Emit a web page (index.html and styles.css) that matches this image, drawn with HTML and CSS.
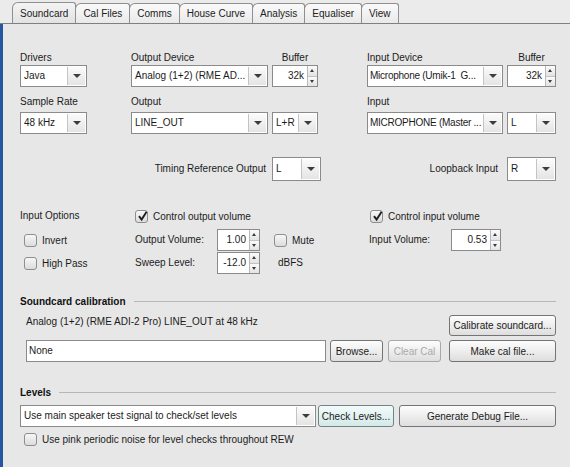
FILE: index.html
```html
<!DOCTYPE html>
<html lang="en">
<head>
    <meta charset="UTF-8">
    <title>REW Preferences - Soundcard</title>
    <link rel="stylesheet" href="styles.css">
</head>
<body>
    <div class="tabs">
        <div class="tab active">Soundcard</div>
        <div class="tab">Cal Files</div>
        <div class="tab">Comms</div>
        <div class="tab">House Curve</div>
        <div class="tab">Analysis</div>
        <div class="tab">Equaliser</div>
        <div class="tab">View</div>
    </div>

    <div class="panel">
        <!-- devices -->
        <div class="cols block">
            <span class="lbl c1">Drivers</span>
            <span class="lbl c3">Output Device</span>
            <span class="lbl c5 mid">Buffer</span>
            <span class="lbl c7">Input Device</span>
            <span class="lbl c9 mid">Buffer</span>

            <div class="combo c1"><span class="val">Java</span><span class="arrow"></span></div>
            <div class="combo c3"><span class="val">Analog (1+2) (RME AD...</span><span class="arrow"></span></div>
            <div class="spin c5"><span class="num">32k</span><span class="btns"><i class="up"></i><i class="dn"></i></span></div>
            <div class="combo c7"><span class="val narrow">Microphone (Umik-1&nbsp; G...</span><span class="arrow"></span></div>
            <div class="spin c9"><span class="num">32k</span><span class="btns"><i class="up"></i><i class="dn"></i></span></div>
        </div>

        <div class="cols block second">
            <span class="lbl c1">Sample Rate</span>
            <span class="lbl c3">Output</span>
            <span class="lbl c7">Input</span>

            <div class="combo c1"><span class="val">48 kHz</span><span class="arrow"></span></div>
            <div class="combo c3"><span class="val">LINE_OUT</span><span class="arrow"></span></div>
            <div class="combo c5"><span class="val">L+R</span><span class="arrow"></span></div>
            <div class="combo c7"><span class="val narrow">MICROPHONE (Master ...</span><span class="arrow"></span></div>
            <div class="combo c9"><span class="val">L</span><span class="arrow"></span></div>
        </div>

        <div class="cols timing">
            <span class="lbl left-span">Timing Reference Output</span>
            <div class="combo tall c5 wide"><span class="val">L</span><span class="arrow"></span></div>
            <span class="lbl right-span">Loopback Input</span>
            <div class="combo tall c9"><span class="val">R</span><span class="arrow"></span></div>
        </div>

        <!-- volume options -->
        <div class="options">
            <span class="lbl o1">Input Options</span>
            <label class="check o2 span4 tight"><span class="box on"><svg width="13" height="13" viewBox="0 0 13 13"><path d="M3 6.2 L5.6 9.6 L10.6 1.8" stroke="#1e1e1e" stroke-width="1.9" fill="none"/></svg></span>Control output volume</label>
            <label class="check o6 span2 tight"><span class="box on"><svg width="13" height="13" viewBox="0 0 13 13"><path d="M3 6.2 L5.6 9.6 L10.6 1.8" stroke="#1e1e1e" stroke-width="1.9" fill="none"/></svg></span>Control input volume</label>

            <label class="check o1 indent"><span class="box"></span>Invert</label>
            <span class="lbl o2 pad1 v">Output Volume:</span>
            <div class="spin o3"><span class="num">1.00</span><span class="btns"><i class="up"></i><i class="dn"></i></span></div>
            <label class="check o5"><span class="box"></span>Mute</label>
            <span class="lbl o6 v">Input Volume:</span>
            <div class="spin o7"><span class="num">0.53</span><span class="btns"><i class="up"></i><i class="dn"></i></span></div>

            <label class="check o1 indent"><span class="box"></span>High Pass</label>
            <span class="lbl o2 pad1 v">Sweep Level:</span>
            <div class="spin o3"><span class="num">-12.0</span><span class="btns"><i class="up"></i><i class="dn"></i></span></div>
            <span class="lbl o5 pad4 v">dBFS</span>
        </div>

        <!-- calibration -->
        <div class="group cal">
            <div class="heading"><span>Soundcard calibration</span></div>
            <div class="row first">
                <span class="info">Analog (1+2) (RME ADI-2 Pro) LINE_OUT at 48 kHz</span>
                <button class="btn w107">Calibrate soundcard...</button>
            </div>
            <div class="row">
                <div class="field">None</div>
                <button class="btn w53">Browse...</button>
                <button class="btn w53 off">Clear Cal</button>
                <button class="btn w107 far">Make cal file...</button>
            </div>
        </div>

        <!-- levels -->
        <div class="group levels">
            <div class="heading"><span>Levels</span></div>
            <div class="row level-row">
                <div class="combo long"><span class="val">Use main speaker test signal to check/set levels</span><span class="arrow"></span></div>
                <button class="btn w76 focus">Check Levels...</button>
                <button class="btn w157">Generate Debug File...</button>
            </div>
            <label class="check pink"><span class="box"></span>Use pink periodic noise for level checks throughout REW</label>
        </div>
    </div>
</body>
</html>
```

FILE: styles.css
```css
body {
    margin: 0;
    width: 570px;
    height: 467px;
    overflow: hidden;
    background: #e7e7e7;
    font-family: "Liberation Sans", Arial, sans-serif;
    font-size: 10px;
    color: #1b1b1b;
}

/* tab strip */
.tabs {
    display: flex;
    align-items: flex-end;
    height: 23px;
    padding-left: 12px;
    border-bottom: 1px solid #808080;
    background: #ebebeb;
}
.tab {
    height: 19px;
    line-height: 19px;
    padding: 0 7px;
    margin-right: -1px;
    border: 1px solid #8f8f8f;
    border-bottom: none;
    border-radius: 6px 3px 0 0;
    background: linear-gradient(#fafafa, #e9e9e9);
    color: #222;
}
.tab.active {
    height: 20px;
    line-height: 21px;
    background: linear-gradient(#f4f4f4, #e2e2e2);
}

/* main panel */
.panel {
    height: 443px;
    box-sizing: border-box;
    border-left: 3px solid #2656a0;
    padding: 27px 14px 0 17px;
}

.cols {
    display: grid;
    grid-template-columns: 67px 44px 137px 4px 46px 49px 136px 4px 49px;
}
.block { grid-template-rows: 14px 22px; }
.block.second { margin-top: 8px; row-gap: 3px; }
.timing { margin-top: 23px; grid-template-rows: 24px; }

.c1 { grid-column: 1; }
.c3 { grid-column: 3; }
.c5 { grid-column: 5; }
.c7 { grid-column: 7; }
.c9 { grid-column: 9; }

.lbl {
    line-height: 14px;
    white-space: nowrap;
}
.lbl.mid { justify-self: center; }
.lbl.left-span { grid-column: 1 / 4; justify-self: end; padding-right: 2px; line-height: 24px; }
.lbl.right-span { grid-column: 6 / 8; justify-self: end; padding-right: 5px; line-height: 24px; }

/* combo box */
.combo {
    display: flex;
    height: 22px;
    box-sizing: border-box;
    border: 1px solid #8b8b8b;
    background: #fff;
    overflow: hidden;
}
.combo.tall { height: 24px; }
.combo.wide { width: 49px; }
.combo .val {
    flex: 1;
    padding-left: 3px;
    line-height: 20px;
    white-space: nowrap;
    overflow: hidden;
}
.combo .val.narrow { letter-spacing: -0.25px; padding-left: 2px; }
.combo.tall .val { line-height: 22px; }
.combo .arrow {
    position: relative;
    flex: none;
    width: 17px;
    margin: 1px;
    border-left: 1px solid #c4c4c4;
    background: linear-gradient(#fbfbfb, #e4e4e4);
}
.combo .arrow::after {
    content: "";
    position: absolute;
    left: 5px;
    top: 50%;
    margin-top: -2px;
    border-left: 4px solid transparent;
    border-right: 4px solid transparent;
    border-top: 4px solid #3c3c3c;
}

/* spinner */
.spin {
    display: flex;
    height: 22px;
    box-sizing: border-box;
    border: 1px solid #8b8b8b;
    background: #fff;
}
.spin .num {
    flex: 1;
    text-align: right;
    padding-right: 3px;
    line-height: 20px;
}
.spin .btns {
    display: flex;
    flex-direction: column;
    width: 9px;
    border-left: 1px solid #b9b9b9;
}
.spin i {
    flex: 1;
    position: relative;
    background: linear-gradient(#fbfbfb, #e3e3e3);
}
.spin i.up { border-bottom: 1px solid #c2c2c2; }
.spin i::after {
    content: "";
    position: absolute;
    left: 2px;
    top: 3px;
    border-left: 2.5px solid transparent;
    border-right: 2.5px solid transparent;
}
.spin i.up::after { border-bottom: 3px solid #3a3a3a; }
.spin i.dn::after { border-top: 3px solid #3a3a3a; top: 3px; }

/* volume options */
.options {
    margin-top: 28px;
    display: grid;
    grid-template-columns: 114px 83px 43px 14px 95px 82px 50px;
    grid-template-rows: 19px 22px 22px;
    row-gap: 1px;
}
.o1 { grid-column: 1; }
.o2 { grid-column: 2; }
.o3 { grid-column: 3; }
.o5 { grid-column: 5; }
.o6 { grid-column: 6; }
.o7 { grid-column: 7; }
.span4 { grid-column: 2 / 6; }
.span2 { grid-column: 6 / 8; }
.tight { align-self: start; }
.pad1 { padding-left: 1px; }
.pad4 { padding-left: 4px; }
.v { align-self: center; }

.check {
    display: flex;
    align-items: center;
    gap: 5px;
    height: 14px;
    white-space: nowrap;
}
.options .check { align-self: center; }
.options .check.tight { align-self: start; }
.check.indent { padding-left: 4px; }
.span4.check, .span2.check { padding-left: 1px; }
.box {
    width: 13px;
    height: 13px;
    box-sizing: border-box;
    border: 1px solid #8e8e8e;
    border-radius: 3px;
    background: linear-gradient(#f7f7f7, #dcdcdc);
    position: relative;
}
.box svg {
    position: absolute;
    left: 0;
    top: -1px;
}

/* groups */
.group.cal { margin-top: 20px; }
.group.levels { margin-top: 23px; }
.heading {
    display: flex;
    align-items: center;
    height: 14px;
    font-weight: bold;
    color: #111;
}
.heading::after {
    content: "";
    flex: 1;
    height: 1px;
    margin-left: 8px;
    background: #b7b7b7;
}
.row {
    display: flex;
    align-items: center;
    margin-top: 4px;
}
.row.first {
    margin-top: 7px;
    justify-content: space-between;
    align-items: flex-start;
}
.info {
    padding-left: 6px;
    line-height: 14px;
}
.field {
    width: 300px;
    height: 22px;
    box-sizing: border-box;
    margin-left: 6px;
    border: 1px solid #8b8b8b;
    background: #fff;
    padding-left: 2px;
    line-height: 20px;
}

.btn {
    height: 22px;
    box-sizing: border-box;
    margin: 0 0 0 4px;
    padding: 0 2px;
    border: 1px solid #747474;
    border-radius: 3px;
    background: linear-gradient(#fdfdfd, #dedede);
    font-family: inherit;
    font-size: 10px;
    color: #1b1b1b;
    white-space: nowrap;
}
.row.first .btn { height: 21px; }
.btn.off { color: #a9a9a9; border-color: #a8a8a8; margin-left: 5px; }
.btn.far { margin-left: 8px; }
.btn.focus {
    background: linear-gradient(#f3fbfb, #d4e9e9);
    border-color: #6f8585;
    margin-left: 2px;
}
.w53 { width: 53px; }
.w76 { width: 76px; }
.w107 { width: 107px; }
.w157 { width: 157px; margin-left: 5px; }

.level-row { margin-top: 6px; }
.combo.long { width: 296px; }
.check.pink {
    margin-top: 6px;
    padding-left: 4px;
    height: 13px;
}
```
